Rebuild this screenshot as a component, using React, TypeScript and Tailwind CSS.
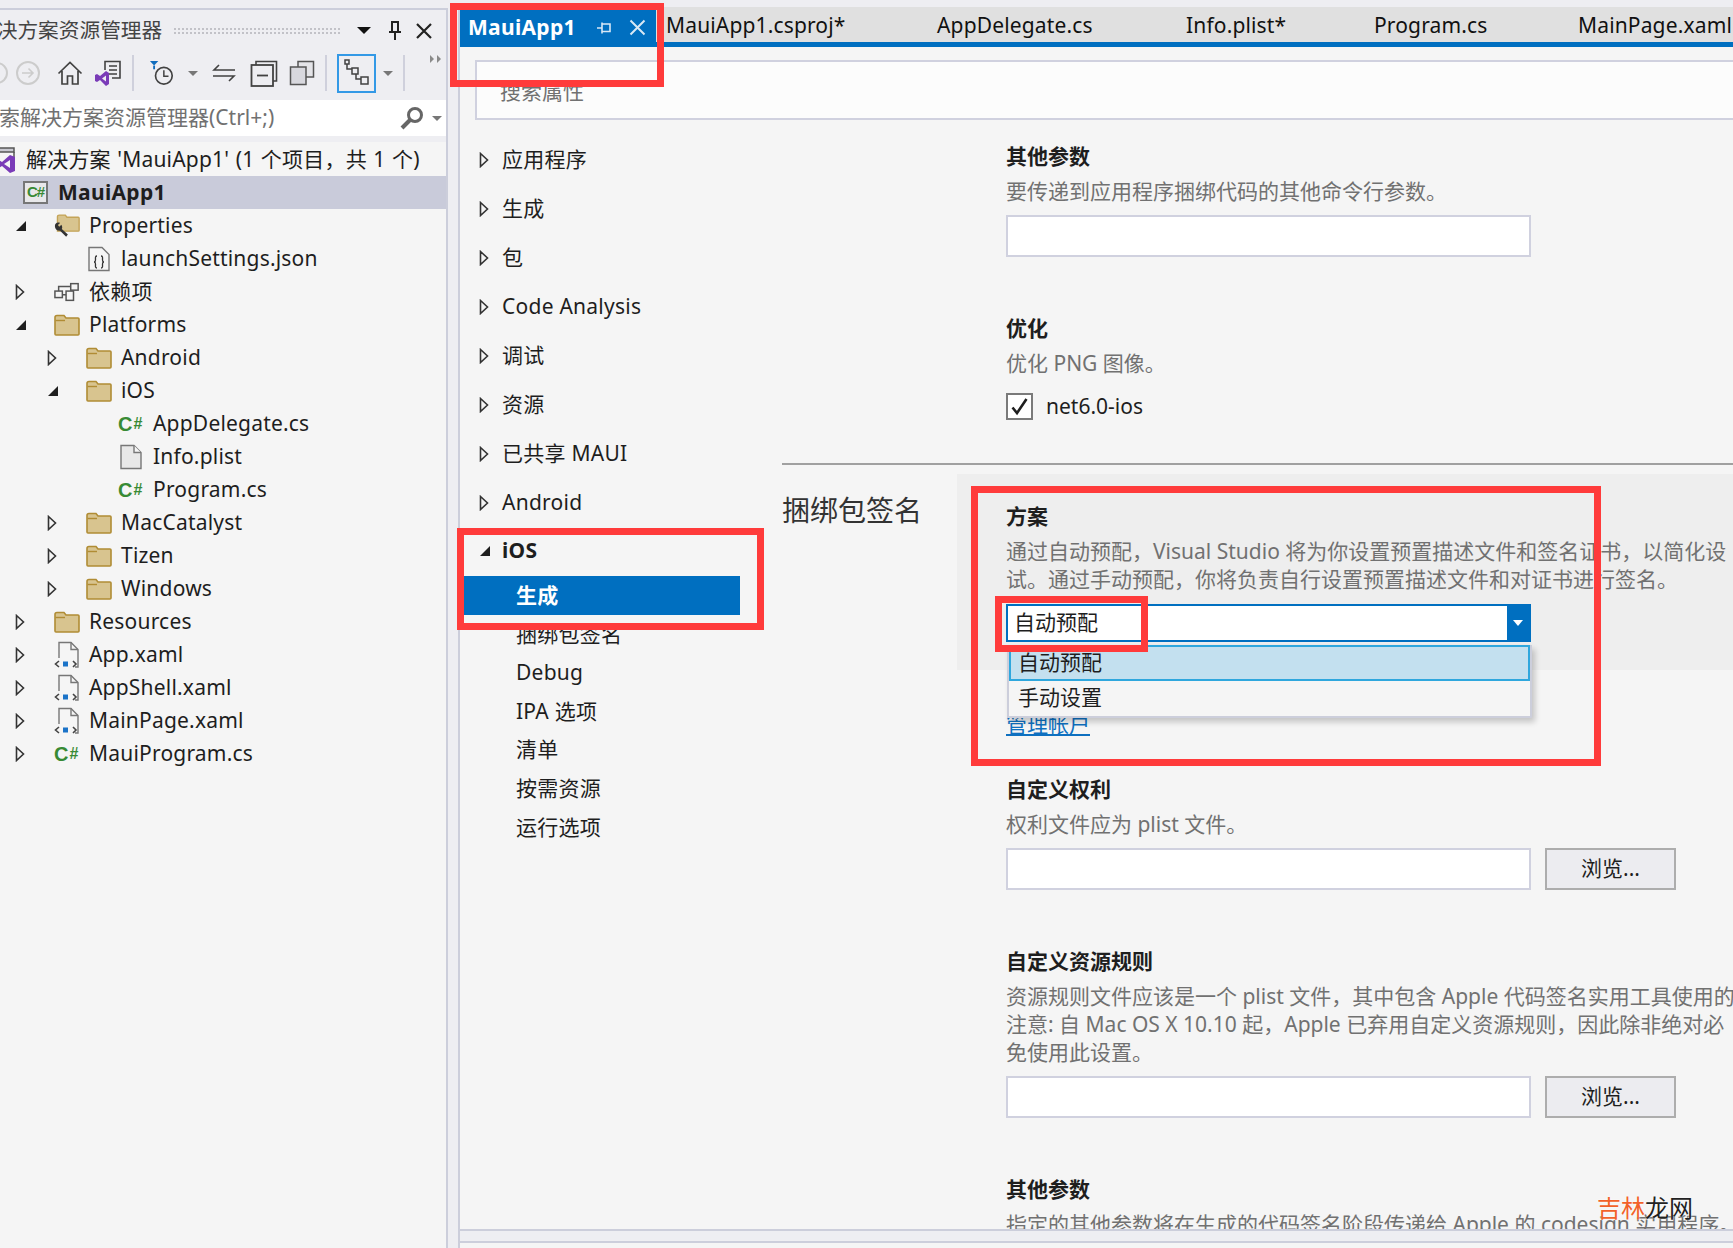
import type { ReactNode } from "react";

const FONT = "[font-family:'Noto_Sans','Noto_Sans_CJK_SC',sans-serif]";

function Triangle({ open }: { open?: boolean }) {
  if (open) {
    return (
      <svg width="12" height="12" viewBox="0 0 12 12">
        <path d="M11 1V11H1Z" fill="#1e1e1e" />
      </svg>
    );
  }
  return (
    <svg width="10" height="16" viewBox="0 0 10 16">
      <path d="M1.5 1.5L8.5 8L1.5 14.5Z" fill="none" stroke="#333" strokeWidth="1.6" />
    </svg>
  );
}

function FolderIcon() {
  return (
    <svg width="26" height="22" viewBox="0 0 26 22">
      <path d="M1 3.5C1 2 2 1.5 3 1.5H10L12 4H24C24.6 4 25 4.4 25 5V20C25 20.6 24.6 21 24 21H2C1.4 21 1 20.6 1 20Z" fill="#d8c48f" stroke="#b08c34" strokeWidth="1.6" />
      <path d="M1.5 6.5H11" stroke="#b08c34" strokeWidth="1.4" />
    </svg>
  );
}

function PropertiesIcon() {
  return (
    <svg width="30" height="27" viewBox="0 0 30 27">
      <path d="M4 3C4 2 5 1.5 6 1.5H13L15 4H28C28.6 4 29 4.4 29 5V19C29 19.6 28.6 20 28 20H4Z" fill="#d8c48f" stroke="#c4a458" strokeWidth="1.6" />
      <path d="M1 14C1 11 4 9 7 10.5L4.5 13L6 15L8.5 12.5C10 15 9.5 16.5 9 17.5L16 24L14 26.5L7 19.5C4 20 1 18 1 14Z" fill="#333" />
    </svg>
  );
}

function CSharpIcon() {
  return (
    <span className="flex w-[26px] items-center [font-family:'Liberation_Sans',sans-serif] text-[20px] leading-none font-bold text-[#388a34]">
      C<span className="ml-[1px] text-[16px] text-[#388a34]">#</span>
    </span>
  );
}

function PlainFile() {
  return (
    <svg width="24" height="26" viewBox="0 0 24 26">
      <path d="M2 1.5H15L22 8.5V24.5H2Z" fill="#e8e8e8" stroke="#777" strokeWidth="1.4" />
      <path d="M15 1.5V8.5H22" fill="#f5f5f5" stroke="#777" strokeWidth="1.4" />
    </svg>
  );
}

function JsonFile() {
  return (
    <svg width="24" height="26" viewBox="0 0 24 26">
      <path d="M2 1.5H15L22 8.5V24.5H2Z" fill="#f5f5f5" stroke="#777" strokeWidth="1.4" />
      <path d="M10 10C8 10 8.5 12 8.5 14C8.5 15.5 7.5 16 7 16C7.5 16 8.5 16.5 8.5 18C8.5 20 8 22 10 22M14 10C16 10 15.5 12 15.5 14C15.5 15.5 16.5 16 17 16C16.5 16 15.5 16.5 15.5 18C15.5 20 16 22 14 22" fill="none" stroke="#333" strokeWidth="1.3" />
    </svg>
  );
}

function XamlFile() {
  return (
    <svg width="26" height="28" viewBox="0 0 26 28">
      <path d="M5 17V1.5H17L24 8.5V26H21" fill="#f5f5f5" stroke="#777" strokeWidth="1.4" />
      <path d="M17 1.5V8.5H24" fill="none" stroke="#777" strokeWidth="1.4" />
      <path d="M5 20L1.5 23L5 26M19 20L22 23L19 26" fill="none" stroke="#444" strokeWidth="1.6" />
      <rect x="9" y="20.5" width="5" height="5" fill="#1b73c8" />
    </svg>
  );
}

function DepsIcon() {
  return (
    <svg width="28" height="22" viewBox="0 0 28 22">
      <g fill="none" stroke="#555" strokeWidth="1.6">
        <rect x="1" y="10" width="8" height="7" />
        <rect x="13" y="10" width="8" height="10" />
        <rect x="18" y="2" width="8" height="7" />
        <path d="M5 10V5H18M9 14H13" />
      </g>
    </svg>
  );
}

function SolutionIcon() {
  return (
    <svg width="22" height="30" viewBox="0 0 22 30">
      <path d="M0 3H20V7H0" fill="#c8c8d0" stroke="#555" strokeWidth="1.5" />
      <path d="M20 7V12" stroke="#555" strokeWidth="1.5" />
      <path d="M16 10L8 17L3 14L1 15V23L3 24L8 21L16 28L21 26V12ZM16 15V23L10 19ZM3 17L6 19L3 21Z" fill="#7a3bb8" />
    </svg>
  );
}

type Node = { label: string; depth: number; arrow?: "open" | "closed"; icon: ReactNode };

const PAD = ["pl-0", "pl-[32px]", "pl-[64px]"];

const NODES: Node[] = [
  { label: "Properties", depth: 0, arrow: "open", icon: <PropertiesIcon /> },
  { label: "launchSettings.json", depth: 1, icon: <JsonFile /> },
  { label: "依赖项", depth: 0, arrow: "closed", icon: <DepsIcon /> },
  { label: "Platforms", depth: 0, arrow: "open", icon: <FolderIcon /> },
  { label: "Android", depth: 1, arrow: "closed", icon: <FolderIcon /> },
  { label: "iOS", depth: 1, arrow: "open", icon: <FolderIcon /> },
  { label: "AppDelegate.cs", depth: 2, icon: <CSharpIcon /> },
  { label: "Info.plist", depth: 2, icon: <PlainFile /> },
  { label: "Program.cs", depth: 2, icon: <CSharpIcon /> },
  { label: "MacCatalyst", depth: 1, arrow: "closed", icon: <FolderIcon /> },
  { label: "Tizen", depth: 1, arrow: "closed", icon: <FolderIcon /> },
  { label: "Windows", depth: 1, arrow: "closed", icon: <FolderIcon /> },
  { label: "Resources", depth: 0, arrow: "closed", icon: <FolderIcon /> },
  { label: "App.xaml", depth: 0, arrow: "closed", icon: <XamlFile /> },
  { label: "AppShell.xaml", depth: 0, arrow: "closed", icon: <XamlFile /> },
  { label: "MainPage.xaml", depth: 0, arrow: "closed", icon: <XamlFile /> },
  { label: "MauiProgram.cs", depth: 0, arrow: "closed", icon: <CSharpIcon /> },
];

function TreeRow({ node }: { node: Node }) {
  return (
    <div className={`flex h-[33px] items-center ${PAD[node.depth]}`}>
      <div className="flex w-[54px] shrink-0 items-center pl-[15px]">
        {node.arrow && <Triangle open={node.arrow === "open"} />}
      </div>
      <div className="flex w-[26px] shrink-0 items-center justify-center">{node.icon}</div>
      <span className="ml-[9px] tracking-[0.2px] whitespace-nowrap text-[#1e1e1e]">{node.label}</span>
    </div>
  );
}

function Toolbar() {
  return (
    <div className="flex h-[44px] items-center">
      <div className="ml-[-14px] h-[22px] w-[22px] rounded-full border-2 border-[#ccc]" />
      <div className="ml-[8px] flex h-[24px] w-[24px] items-center justify-center rounded-full border-2 border-[#ccc]">
        <svg width="14" height="12" viewBox="0 0 14 12">
          <path d="M1 6H12M7.5 1.5L12 6L7.5 10.5" fill="none" stroke="#ccc" strokeWidth="1.6" />
        </svg>
      </div>
      <div className="ml-[17px] flex w-[26px] justify-center">
        <svg width="26" height="24" viewBox="0 0 26 24">
          <path d="M1.5 12.5L13 1.5L24.5 12.5M5 10V23H10.5V15H15.5V23H21V10" fill="none" stroke="#424242" strokeWidth="1.7" />
        </svg>
      </div>
      <div className="ml-[11px] flex w-[28px] justify-center">
        <svg width="28" height="27" viewBox="0 0 28 27">
          <path d="M11 10V1.5H26V18H18" fill="none" stroke="#424242" strokeWidth="1.6" />
          <path d="M15 6H23M15 10H23M15 14H23" stroke="#424242" strokeWidth="1.4" />
          <path d="M12 11L6 16L3 14L1 15V21L3 22L6 20L12 26L15 24V13ZM12 15.5V21.5L8 18.5Z" fill="#7a3bb8" />
        </svg>
      </div>
      <div className="ml-[10px] h-[36px] w-[2px] bg-[#cfd0dc]" />
      <div className="ml-[15px] flex w-[26px] justify-center">
        <svg width="28" height="28" viewBox="0 0 28 28">
          <path d="M1 1H10L5.5 6Z" fill="#0f6cbd" />
          <path d="M5.5 6V10" stroke="#0f6cbd" strokeWidth="2" />
          <circle cx="16" cy="17" r="9" fill="none" stroke="#424242" strokeWidth="1.8" />
          <path d="M16 11V17.5H21" fill="none" stroke="#424242" strokeWidth="1.6" />
        </svg>
      </div>
      <div className="ml-[13px] h-0 w-0 border-x-[5px] border-t-[5px] border-x-transparent border-t-[#777]" />
      <div className="ml-[14px] flex w-[24px] justify-center">
        <svg width="24" height="18" viewBox="0 0 24 18">
          <path d="M23 6H2L7 1M1 12H22L17 17" fill="none" stroke="#424242" strokeWidth="1.6" />
        </svg>
      </div>
      <div className="ml-[14px] flex w-[28px] justify-center">
        <svg width="28" height="27" viewBox="0 0 28 27">
          <path d="M6 5V1.5H26.5V21H23" fill="none" stroke="#424242" strokeWidth="1.6" />
          <rect x="1.5" y="5" width="21.5" height="21" fill="none" stroke="#424242" strokeWidth="1.8" />
          <path d="M7 15.5H18" stroke="#424242" strokeWidth="1.8" />
        </svg>
      </div>
      <div className="ml-[11px] flex w-[26px] justify-center">
        <svg width="26" height="26" viewBox="0 0 26 26">
          <rect x="9" y="1.5" width="15.5" height="15.5" fill="#e4e4e8" stroke="#555" strokeWidth="1.5" />
          <rect x="1.5" y="7" width="15.5" height="17.5" fill="#d8d8de" stroke="#555" strokeWidth="1.5" />
        </svg>
      </div>
      <div className="ml-[10px] h-[36px] w-[2px] bg-[#cfd0dc]" />
      <div className="ml-[10px] flex h-[39px] w-[39px] items-center justify-center border-2 border-[#3399e6]">
        <svg width="26" height="28" viewBox="0 0 26 28">
          <g fill="#eeeef2" stroke="#424242" strokeWidth="1.5">
            <path d="M3 4V10H8M12 14V20H17" fill="none" />
            <rect x="1" y="1" width="4" height="4" />
            <rect x="8" y="9" width="6" height="6" />
            <rect x="17" y="18" width="7" height="7" />
          </g>
        </svg>
      </div>
      <div className="ml-[7px] h-0 w-0 border-x-[5px] border-t-[5px] border-x-transparent border-t-[#777]" />
      <div className="ml-[10px] h-[36px] w-[2px] bg-[#cfd0dc]" />
      <div className="mb-[28px] ml-[25px] flex gap-[3px]">
        <div className="h-0 w-0 border-y-[4px] border-l-[4px] border-y-transparent border-l-[#8a8a8a]" />
        <div className="h-0 w-0 border-y-[4px] border-l-[4px] border-y-transparent border-l-[#8a8a8a]" />
      </div>
    </div>
  );
}

function Explorer() {
  return (
    <aside className="flex h-[1240px] w-[448px] shrink-0 flex-col overflow-hidden border-t-2 border-r-2 border-[#cccedb] bg-[#eeeef2]">
      <div className="flex h-[41px] items-center whitespace-nowrap">
        <span className="ml-[-24px] text-[20.7px] text-[#444]">解决方案资源管理器</span>
        <div className="ml-[12px] h-[6px] w-[166px] border-y-2 border-dotted border-[#c2c2c8]" />
        <div className="ml-[17px] h-0 w-0 border-x-[7px] border-t-[7px] border-x-transparent border-t-[#111]" />
        <svg className="ml-[17px]" width="14" height="20" viewBox="0 0 14 20">
          <path d="M3 1H11M4 1V11H10V1M1 11H13M7 11V19" fill="none" stroke="#222" strokeWidth="2" />
        </svg>
        <svg className="ml-[14px]" width="16" height="16" viewBox="0 0 16 16">
          <path d="M1 1L15 15M15 1L1 15" stroke="#222" strokeWidth="2.2" />
        </svg>
      </div>
      <Toolbar />
      <div className="mt-[5px] flex h-[36px] items-center bg-white whitespace-nowrap">
        <span className="ml-[-22px] flex-1 text-[#717171]">搜索解决方案资源管理器(Ctrl+;)</span>
        <svg width="24" height="24" viewBox="0 0 24 24">
          <circle cx="15" cy="9" r="6.5" fill="none" stroke="#666" strokeWidth="3" />
          <path d="M10 14L2 22" stroke="#666" strokeWidth="4" />
        </svg>
        <div className="mr-[4px] ml-[8px] h-0 w-0 border-x-[5px] border-t-[5px] border-x-transparent border-t-[#777]" />
      </div>
      <div className="mt-[6px] flex-1 bg-[#f5f5f5] pt-[1px]">
        <div className="flex h-[33px] items-center">
          <div className="ml-[-6px] flex"><SolutionIcon /></div>
          <span className="ml-[10px] tracking-[0.2px] [word-spacing:0.8px] whitespace-nowrap text-[#1e1e1e]">解决方案 'MauiApp1' (1 个项目，共 1 个)</span>
        </div>
        <div className="flex h-[33px] items-center bg-[#c9cbda] pl-[23px]">
          <div className="flex h-[23px] w-[25px] items-center justify-center border-2 border-[#777] bg-[#e8e8ea] [font-family:'Liberation_Sans',sans-serif] text-[15px] font-bold tracking-[-1px] text-[#388a34]">
            C#
          </div>
          <span className="ml-[10px] font-bold tracking-[0.3px] text-[#1e1e1e]">MauiApp1</span>
        </div>
        {NODES.map((n) => (
          <TreeRow key={n.label} node={n} />
        ))}
      </div>
    </aside>
  );
}

const TABS: { label: string; width: string }[] = [
  { label: "MauiApp1.csproj*", width: "w-[271px]" },
  { label: "AppDelegate.cs", width: "w-[249px]" },
  { label: "Info.plist*", width: "w-[188px]" },
  { label: "Program.cs", width: "w-[204px]" },
  { label: "MainPage.xaml", width: "w-[200px]" },
];

function TabStrip() {
  return (
    <div className="flex h-[40px] items-stretch whitespace-nowrap">
      <div className="mt-[3px] flex w-[196px] shrink-0 items-center bg-[#006fc0] pb-[2px] pl-[8px] text-white">
        <span className="font-bold tracking-[0.3px]">MauiApp1</span>
        <svg className="ml-[20px]" width="16" height="14" viewBox="0 0 16 14">
          <path d="M1 7H6M6 1.5V12.5M6 3H14V10.5H6" fill="none" stroke="#d8e8f5" strokeWidth="1.6" />
        </svg>
        <svg className="ml-[17px]" width="17" height="17" viewBox="0 0 17 17">
          <path d="M1.5 1.5L15.5 15.5M15.5 1.5L1.5 15.5" stroke="#d8e8f5" strokeWidth="2" />
        </svg>
      </div>
      <div className="flex flex-1 overflow-hidden border-b-[5px] border-[#006fc0] bg-[#e0e0e0] pl-[10px]">
        {TABS.map((t) => (
          <div key={t.label} className={`flex shrink-0 items-center pt-[2px] tracking-[0.15px] text-[#111] ${t.width}`}>
            {t.label}
          </div>
        ))}
      </div>
    </div>
  );
}

const NAV_TOP = ["应用程序", "生成", "包", "Code Analysis", "调试", "资源", "已共享 MAUI", "Android"];
const NAV_SUB = ["捆绑包签名", "Debug", "IPA 选项", "清单", "按需资源", "运行选项"];

function NavTree() {
  return (
    <nav className="w-[322px] shrink-0 pt-[15px] tracking-[0.25px] text-[#1e1e1e]">
      {NAV_TOP.map((item) => (
        <div key={item} className="flex h-[49px] items-center whitespace-nowrap pl-[19px]">
          <Triangle />
          <span className="ml-[13px]">{item}</span>
        </div>
      ))}
      <div className="flex h-[48px] items-center pl-[19px]">
        <Triangle open />
        <span className="ml-[11px] font-bold">iOS</span>
      </div>
      <div className="mt-[1px] flex h-[39px] w-[280px] items-center bg-[#006fc0] pl-[56px] font-bold text-white">生成</div>
      {NAV_SUB.map((item) => (
        <div key={item} className="flex h-[38.6px] items-center pl-[56px]">{item}</div>
      ))}
    </nav>
  );
}

function Field({ browse }: { browse?: boolean }) {
  return (
    <div className="mt-[10px] flex h-[42px] gap-[14px]">
      <div className="w-[525px] border-2 border-[#d0d1df] bg-white" />
      {browse && (
        <div className="flex w-[131px] items-center justify-center border-2 border-[#adadad] bg-[#ececf0] text-[#1e1e1e]">浏览...</div>
      )}
    </div>
  );
}

function Title({ children }: { children: ReactNode }) {
  return <div className="h-[30px] font-bold text-[#1e1e1e]">{children}</div>;
}

function Desc({ lines }: { lines: string[] }) {
  return (
    <div className="mt-[6px] leading-[28px] whitespace-nowrap text-[#717171]">
      {lines.map((l) => (
        <div key={l}>{l}</div>
      ))}
    </div>
  );
}

function Settings() {
  return (
    <div className="min-w-0 flex-1 overflow-hidden">
      <div className="pt-[21px] pl-[224px]">
        <Title>其他参数</Title>
        <Desc lines={["要传递到应用程序捆绑代码的其他命令行参数。"]} />
        <Field />
        <div className="mt-[56px]"><Title>优化</Title></div>
        <Desc lines={["优化 PNG 图像。"]} />
        <div className="mt-[16px] flex h-[27px] items-center gap-[13px]">
          <div className="flex h-[27px] w-[27px] items-center justify-center border-2 border-[#7a7a7a] bg-white">
            <svg width="19" height="19" viewBox="0 0 19 19">
              <path d="M2.5 10.5L7 16L16.5 2" fill="none" stroke="#1e1e1e" strokeWidth="2.6" />
            </svg>
          </div>
          <span className="text-[#1e1e1e]">net6.0-ios</span>
        </div>
      </div>
      <div className="mt-[43px] h-[2px] bg-[#a0a0a0]" />
      <div className="mt-[9px] flex h-[196px]">
        <div className="w-[175px] shrink-0 pt-[14px] text-[28px] leading-[44px] whitespace-nowrap text-[#333]">捆绑包签名</div>
        <div className="flex-1 bg-[#eeeeee] pt-[27px] pl-[49px]">
          <Title>方案</Title>
          <Desc lines={["通过自动预配，Visual Studio 将为你设置预置描述文件和签名证书，以简化设", "试。通过手动预配，你将负责自行设置预置描述文件和对证书进行签名。"]} />
          <div className="mt-[11px] flex h-[38px] w-[525px] items-stretch border-2 border-[#006fc0] bg-white">
            <span className="flex-1 pl-[6px] leading-[33px] text-[#1e1e1e]">自动预配</span>
            <div className="flex w-[22px] items-center justify-center bg-[#006fc0]">
              <div className="h-0 w-0 border-x-[5px] border-t-[6px] border-x-transparent border-t-white" />
            </div>
          </div>
        </div>
      </div>
      <div className="pl-[224px]">
        <div className="mt-[40px] leading-[28px] text-[#0e70c0] underline">管理帐户</div>
        <div className="mt-[36px]"><Title>自定义权利</Title></div>
        <Desc lines={["权利文件应为 plist 文件。"]} />
        <Field browse />
        <div className="mt-[56px]"><Title>自定义资源规则</Title></div>
        <Desc lines={["资源规则文件应该是一个 plist 文件，其中包含 Apple 代码签名实用工具使用的", "注意: 自 Mac OS X 10.10 起，Apple 已弃用自定义资源规则，因此除非绝对必", "免使用此设置。"]} />
        <Field browse />
        <div className="mt-[56px]"><Title>其他参数</Title></div>
        <Desc lines={["指定的其他参数将在生成的代码签名阶段传递给 Apple 的 codesign 实用程序。"]} />
      </div>
    </div>
  );
}

function Dropdown() {
  return (
    <div className="absolute top-[645px] left-[1007px] h-[73px] w-[525px] border-2 border-t-0 border-[#cccedb] bg-[#f5f5f5] shadow-[3px_4px_6px_rgba(0,0,0,0.2)]">
      <div className="flex h-[36px] items-center border-2 border-[#2fa7dd] bg-[#c3e0ef] pl-[7px] text-[#1e1e1e]">自动预配</div>
      <div className="flex h-[34px] items-center pl-[9px] text-[#1e1e1e]">手动设置</div>
    </div>
  );
}

function Marks() {
  return (
    <>
      <div className="absolute top-[3px] left-[450px] h-[84px] w-[214px] border-[7px] border-[#ff3b3b]" />
      <div className="absolute top-[528px] left-[457px] h-[102px] w-[307px] border-[7px] border-[#ff3b3b]" />
      <div className="absolute top-[486px] left-[971px] h-[280px] w-[630px] border-[7px] border-[#ff3b3b]" />
      <div className="absolute top-[596px] left-[995px] h-[56px] w-[153px] border-[7px] border-[#ff3b3b]" />
    </>
  );
}

export default function App() {
  return (
    <div className={`relative flex h-[1248px] w-[1733px] items-end overflow-hidden bg-[#eeeef2] text-[21px] leading-normal ${FONT}`}>
      <Explorer />
      <main className="ml-[10px] flex h-[1241px] min-w-0 flex-1 flex-col border-l-2 border-[#cccedb]">
        <TabStrip />
        <div className="flex h-[1184px] flex-col overflow-hidden border-b-2 border-[#cccedb] bg-[#f5f5f5]">
          <div className="mt-[13px] ml-[15px] h-[60px] shrink-0 border-y-2 border-l-2 border-[#d0d1df] bg-[#fcfcfc] pt-[14px] pl-[23px] text-[#717171]">搜索属性</div>
          <div className="flex min-h-0 flex-1">
            <NavTree />
            <Settings />
          </div>
        </div>
        <div className="h-[12px] border-b-2 border-[#cccedb]" />
        <div className="flex-1 bg-[#f5f5f5]" />
      </main>
      <Dropdown />
      <Marks />
      <div className="absolute top-[1190px] left-[1597px] text-[24px] whitespace-nowrap [text-shadow:0_0_2px_white]">
        <span className="text-[#f2622a]">吉林</span>
        <span className="text-[#222]">龙网</span>
      </div>
    </div>
  );
}
